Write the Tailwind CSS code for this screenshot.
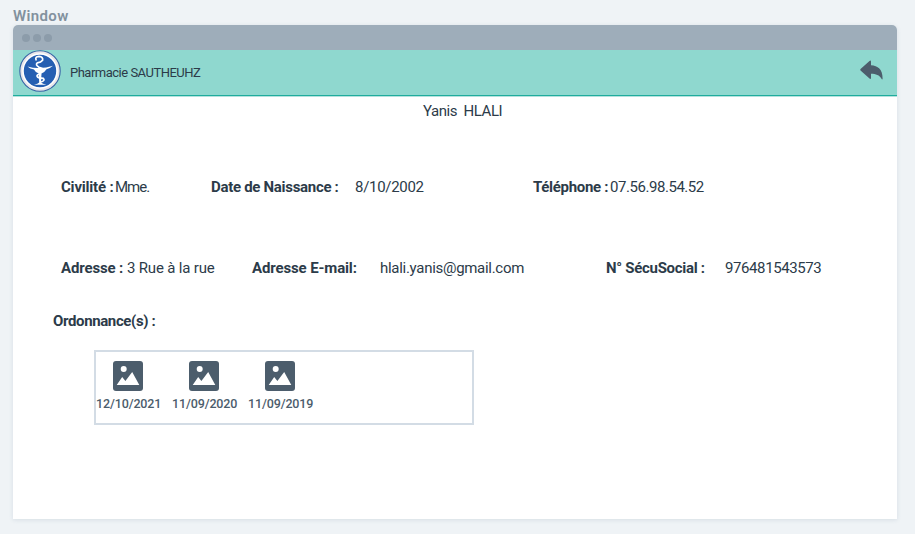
<!DOCTYPE html>
<html lang="fr">
<head>
<meta charset="utf-8">
<title>Pharmacie SAUTHEUHZ</title>
<script src="https://cdn.jsdelivr.net/npm/@tailwindcss/browser@4"></script>
</head>
<body class="w-[915px] h-[534px] overflow-hidden bg-[#eff3f6] font-['Roboto',sans-serif] text-[#2c3b49] pl-[13px]">
<svg class="hidden">
  <symbol id="picture" viewBox="0 0 30 30">
    <rect width="30" height="30" rx="3" fill="#4c5d6c"/>
    <circle cx="10.7" cy="8" r="3" fill="#fff"/>
    <path d="M3.7 24 L9.2 16 L12.4 20 L19.2 11 L26.3 24 Z" fill="#fff"/>
  </symbol>
</svg>
<div class="h-[25px] pt-[6px] text-[15px] leading-[20px] font-semibold tracking-[0.35px] text-[#82919e] whitespace-nowrap">Window</div>
<main class="w-[884px] h-[494px] bg-white rounded-t-[5px] shadow-[0_1px_4px_rgba(90,120,140,0.16)] overflow-hidden whitespace-nowrap">
  <div class="h-[25px] bg-[#9eadba] flex items-center gap-[3px] pl-[9px]">
    <i class="size-[8px] rounded-full bg-[#8c9caa]"></i><i class="size-[8px] rounded-full bg-[#8c9caa]"></i><i class="size-[8px] rounded-full bg-[#8c9caa]"></i>
  </div>
  <header class="h-[46px] bg-[#8fd8cf] border-b border-[#1fac9d] flex items-start pl-[6px] pr-[14px] shadow-[0_1px_0_#b5e2dd]">
    <svg class="size-[42px] shrink-0" viewBox="0 0 42 42">
      <circle cx="21" cy="21" r="20.2" fill="#e8e5e9" stroke="#3563a5" stroke-width="1.1"/>
      <circle cx="21" cy="21" r="17" fill="#265fb2" stroke="#fff" stroke-width="1.6"/>
      <path d="M8.5 16.5 Q15 18.3 20.5 18 Q27 18 34 15.8 Q31 18.5 27.5 19.3 Q25.5 22.5 22.5 23.6 L22 32.5 Q23.5 34 27.5 34.8 H15 Q19 34 20.2 32.5 L19.8 23.6 Q16.5 22.5 15 19.4 Q11 19 8.5 16.5Z" fill="#fff"/>
      <path d="M17.3 10.5 Q15.5 6.6 20 6.4 Q24.3 6.8 23.6 10.3 Q22 12.4 18.3 12.8 Q16 15 20 17.2 L23.5 18.5 M22 23.5 Q16.5 25 18.5 27 Q20 28.3 24.3 28.3 Q26.5 30.5 22 32" fill="none" stroke="#fff" stroke-width="1.7"/>
    </svg>
    <span class="ml-[9px] mt-[13px] text-[13px] leading-[20px] tracking-[-0.5px]">Pharmacie SAUTHEUHZ</span>
    <svg class="ml-auto mt-[10px] w-[23px] h-[20px]" viewBox="0 0 23 20" fill="#4c5d6c">
      <path d="M9.5 1 Q11 -.2 11 1.8 V5.3 C18 5.6 22.8 9.6 22.6 19 Q22.2 20 21.5 18.8 C19.5 15.2 16 13.8 11 13.8 V18 Q11 19.8 9.5 18.6 L.8 10.8 Q-.3 9.8 .8 8.8Z"/>
    </svg>
  </header>
  <section class="pt-[5px] text-[15px] leading-[20px]">
    <h1 class="pl-[410px] whitespace-pre tracking-[-0.45px]">Yanis  HLALI</h1>
    <div class="mt-[56px] pl-[48px] flex">
      <div class="w-[54px] font-bold tracking-[-0.2px]">Civilité :</div>
      <div class="w-[96px] tracking-[-1px]">Mme.</div>
      <div class="w-[144px] font-bold tracking-[-0.3px]">Date de Naissance :</div>
      <div class="w-[178px] tracking-[-0.3px]">8/10/2002</div>
      <div class="w-[77px] font-bold tracking-[-0.3px]">Téléphone :</div>
      <div class="tracking-[-0.45px]">07.56.98.54.52</div>
    </div>
    <div class="mt-[61px] pl-[48px] flex">
      <div class="w-[66px] font-bold tracking-[-0.15px]">Adresse :</div>
      <div class="w-[125px] tracking-[-0.18px]">3 Rue à la rue</div>
      <div class="w-[128px] font-bold tracking-[-0.13px]">Adresse E-mail:</div>
      <div class="w-[226px] tracking-[-0.29px]">hlali.yanis@gmail.com</div>
      <div class="w-[119px] font-bold tracking-[-0.29px]">N° SécuSocial :</div>
      <div class="tracking-[-0.4px]">976481543573</div>
    </div>
    <h2 class="mt-[33px] pl-[40px] font-bold tracking-[-0.37px]">Ordonnance(s) :</h2>
    <div class="mt-[19px] ml-[81px] w-[380px] h-[75px] border-2 border-[#d3dce5] pt-[9px] flex text-[12.5px] font-medium tracking-[-0.13px] text-[#4c5d6c]">
      <div class="w-[76px] shrink-0"><svg class="ml-[17px] size-[30px]"><use href="#picture"/></svg><p class="mt-[3px]">12/10/2021</p></div>
      <div class="w-[76px] shrink-0"><svg class="ml-[17px] size-[30px]"><use href="#picture"/></svg><p class="mt-[3px]">11/09/2020</p></div>
      <div class="w-[76px] shrink-0"><svg class="ml-[17px] size-[30px]"><use href="#picture"/></svg><p class="mt-[3px]">11/09/2019</p></div>
    </div>
  </section>
</main>
</body>
</html>
